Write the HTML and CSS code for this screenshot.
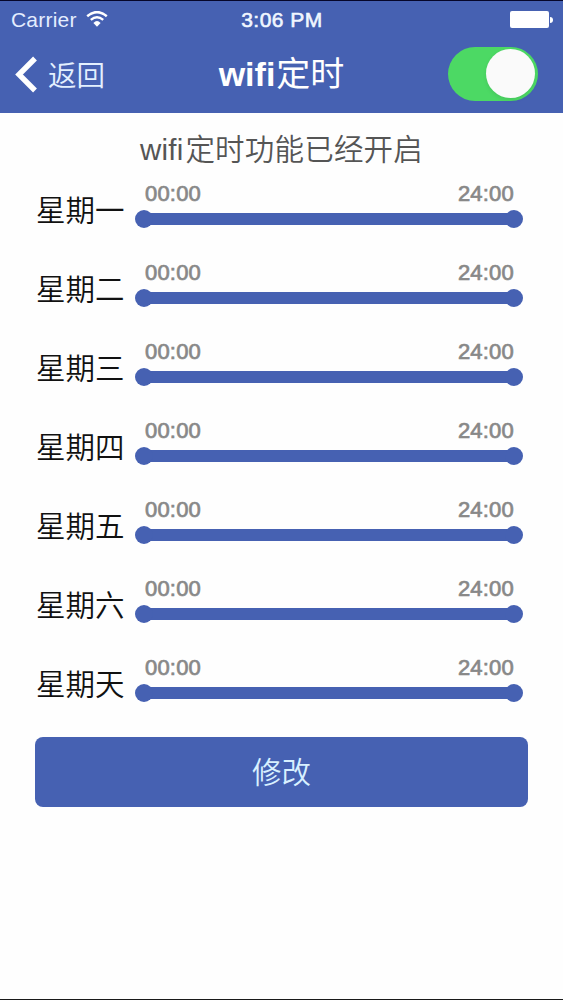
FILE: index.html
```html
<!DOCTYPE html>
<html lang="zh-CN">

<head>
    <title>wifi定时</title>

    <meta charset="UTF-8">
    <meta name="viewport" content="width=device-width, initial-scale=1.0">

    <link rel="stylesheet" href="styles.css">
</head>

<body>
    <div class="screen">
        <header class="header">
            <div class="status-bar">
                <div class="status-left">
                    <span class="carrier">Carrier</span>
                    <svg class="wifi" viewBox="0 0 22 16" width="22" height="16">
                        <path d="M1.2 5.2 Q11 -3 20.8 5.2" fill="none" stroke="#fff" stroke-width="2.5" />
                        <path d="M4.8 8.9 Q11 3.6 17.2 8.9" fill="none" stroke="#fff" stroke-width="2.4" />
                        <path d="M7.4 12 Q11 8.2 14.6 12 L11 15.8 Z" fill="#fff" />
                    </svg>
                </div>
                <span class="clock">3:06 PM</span>
                <div class="status-right">
                    <div class="battery"></div>
                    <div class="battery-tip"></div>
                </div>
            </div>
            <div class="nav-bar">
                <a class="back" href="#">
                    <svg viewBox="0 0 22 37" width="22" height="37">
                        <path d="M20 2.5 L4 18.5 L20 34.5" fill="none" stroke="#fff" stroke-width="5.4" />
                    </svg>
                    <span>返回</span>
                </a>
                <h1 class="title">wifi<span>定时</span></h1>
                <div class="nav-right">
                    <div class="switch">
                        <div class="switch-knob"></div>
                    </div>
                </div>
            </div>
        </header>

        <main class="content">
            <p class="message"><span>wifi</span>定时功能已经开启</p>

            <ul class="days">
                <li class="day">
                    <span class="day-name">星期一</span>
                    <div class="range">
                        <div class="times"><span>00:00</span><span>24:00</span></div>
                        <div class="slider"><i class="handle"></i><i class="handle"></i></div>
                    </div>
                </li>
                <li class="day">
                    <span class="day-name">星期二</span>
                    <div class="range">
                        <div class="times"><span>00:00</span><span>24:00</span></div>
                        <div class="slider"><i class="handle"></i><i class="handle"></i></div>
                    </div>
                </li>
                <li class="day">
                    <span class="day-name">星期三</span>
                    <div class="range">
                        <div class="times"><span>00:00</span><span>24:00</span></div>
                        <div class="slider"><i class="handle"></i><i class="handle"></i></div>
                    </div>
                </li>
                <li class="day">
                    <span class="day-name">星期四</span>
                    <div class="range">
                        <div class="times"><span>00:00</span><span>24:00</span></div>
                        <div class="slider"><i class="handle"></i><i class="handle"></i></div>
                    </div>
                </li>
                <li class="day">
                    <span class="day-name">星期五</span>
                    <div class="range">
                        <div class="times"><span>00:00</span><span>24:00</span></div>
                        <div class="slider"><i class="handle"></i><i class="handle"></i></div>
                    </div>
                </li>
                <li class="day">
                    <span class="day-name">星期六</span>
                    <div class="range">
                        <div class="times"><span>00:00</span><span>24:00</span></div>
                        <div class="slider"><i class="handle"></i><i class="handle"></i></div>
                    </div>
                </li>
                <li class="day">
                    <span class="day-name">星期天</span>
                    <div class="range">
                        <div class="times"><span>00:00</span><span>24:00</span></div>
                        <div class="slider"><i class="handle"></i><i class="handle"></i></div>
                    </div>
                </li>
            </ul>

            <button type="button" class="edit">修改</button>
        </main>
    </div>
</body>

</html>
```
FILE: styles.css
```css
* {
    box-sizing: border-box;
}

body {
    margin: 0;
    font-family: "Liberation Sans", "Noto Sans CJK SC", sans-serif;
    font-weight: 350;
    background-color: #fefefe;
}

.screen {
    height: 1000px;
    border-top: 1px solid #06062a;
    border-bottom: 1px solid #1a1a1a;
    overflow: hidden;
}

/* header */

.header {
    height: 112px;
    background-color: #4661b2;
    color: #fff;
}

.status-bar {
    display: flex;
    align-items: center;
    height: 37px;
    padding: 0 10px 0 11px;
}

.status-left,
.status-right {
    display: flex;
    flex: 1;
    align-items: center;
}

.carrier {
    font-size: 21px;
    letter-spacing: 0.2px;
    color: #e4edff;
}

.wifi {
    margin: -2px 0 0 9px;
}

.clock {
    font-size: 21px;
    letter-spacing: 0.5px;
    color: #f0f6ff;
    -webkit-text-stroke: 0.6px #f0f6ff;
}

.status-right {
    justify-content: flex-end;
}

.battery {
    width: 39px;
    height: 17px;
    border-radius: 2px;
    background-color: #fff;
}

.battery-tip {
    width: 3px;
    height: 6px;
    margin-left: 1px;
    border-radius: 0 3px 3px 0;
    background-color: #fff;
}

.nav-bar {
    display: flex;
    align-items: center;
    height: 73px;
    padding: 0 15px;
}

.back {
    display: flex;
    flex: 1;
    align-items: center;
    font-size: 28.5px;
    line-height: 40px;
    color: #e4f0ff;
    text-decoration: none;
}

.back svg {
    margin-right: 11px;
}

.back span {
    padding-top: 2px;
}

.title {
    margin: 0;
    padding-bottom: 2px;
    font-size: 34px;
    line-height: 40px;
    font-weight: bold;
}

.title span {
    margin-left: 1px;
    font-weight: 400;
}

.nav-right {
    display: flex;
    flex: 1;
    justify-content: flex-end;
}

.switch {
    display: flex;
    justify-content: flex-end;
    width: 90px;
    height: 54px;
    margin: 0 10px 2px 0;
    padding: 2px 3px 3px;
    border-radius: 27px;
    background-color: #4cd964;
}

.switch-knob {
    width: 49px;
    height: 49px;
    border-radius: 50%;
    background-color: #fafafa;
    box-shadow: 0 2px 4px rgba(0, 0, 0, 0.08);
}

/* content */

.content {
    padding: 17px 35px 0;
}

.message {
    margin: 0;
    font-size: 29.5px;
    line-height: 40px;
    letter-spacing: 0.2px;
    text-align: center;
    color: #555;
}

.message span {
    margin-right: 2px;
}

.days {
    margin: 12px 0 0;
    padding: 0;
    list-style: none;
}

.day {
    display: flex;
    height: 79px;
}

.day-name {
    width: 100px;
    padding: 9px 0 0 1px;
    font-size: 29.5px;
    line-height: 40px;
    color: #111;
}

.range {
    width: 388px;
}

.times {
    display: flex;
    justify-content: space-between;
    padding: 0 9px 0 10px;
    font-size: 22px;
    line-height: 24px;
    letter-spacing: 0.2px;
    color: #888;
    -webkit-text-stroke: 0.7px #888;
}

.slider {
    display: flex;
    align-items: center;
    justify-content: space-between;
    height: 18px;
    margin-top: 4px;
    background: linear-gradient(#4661b2, #4661b2) center / 370px 12px no-repeat;
}

.handle {
    width: 18px;
    height: 18px;
    border-radius: 50%;
    background-color: #4661b2;
}

.edit {
    display: block;
    width: 493px;
    height: 70px;
    margin-top: 2px;
    padding: 0 0 4px;
    border: none;
    border-radius: 8px;
    background-color: #4661b2;
    font-family: inherit;
    font-size: 29.5px;
    font-weight: 350;
    color: #d8f0ff;
    cursor: pointer;
}
```
